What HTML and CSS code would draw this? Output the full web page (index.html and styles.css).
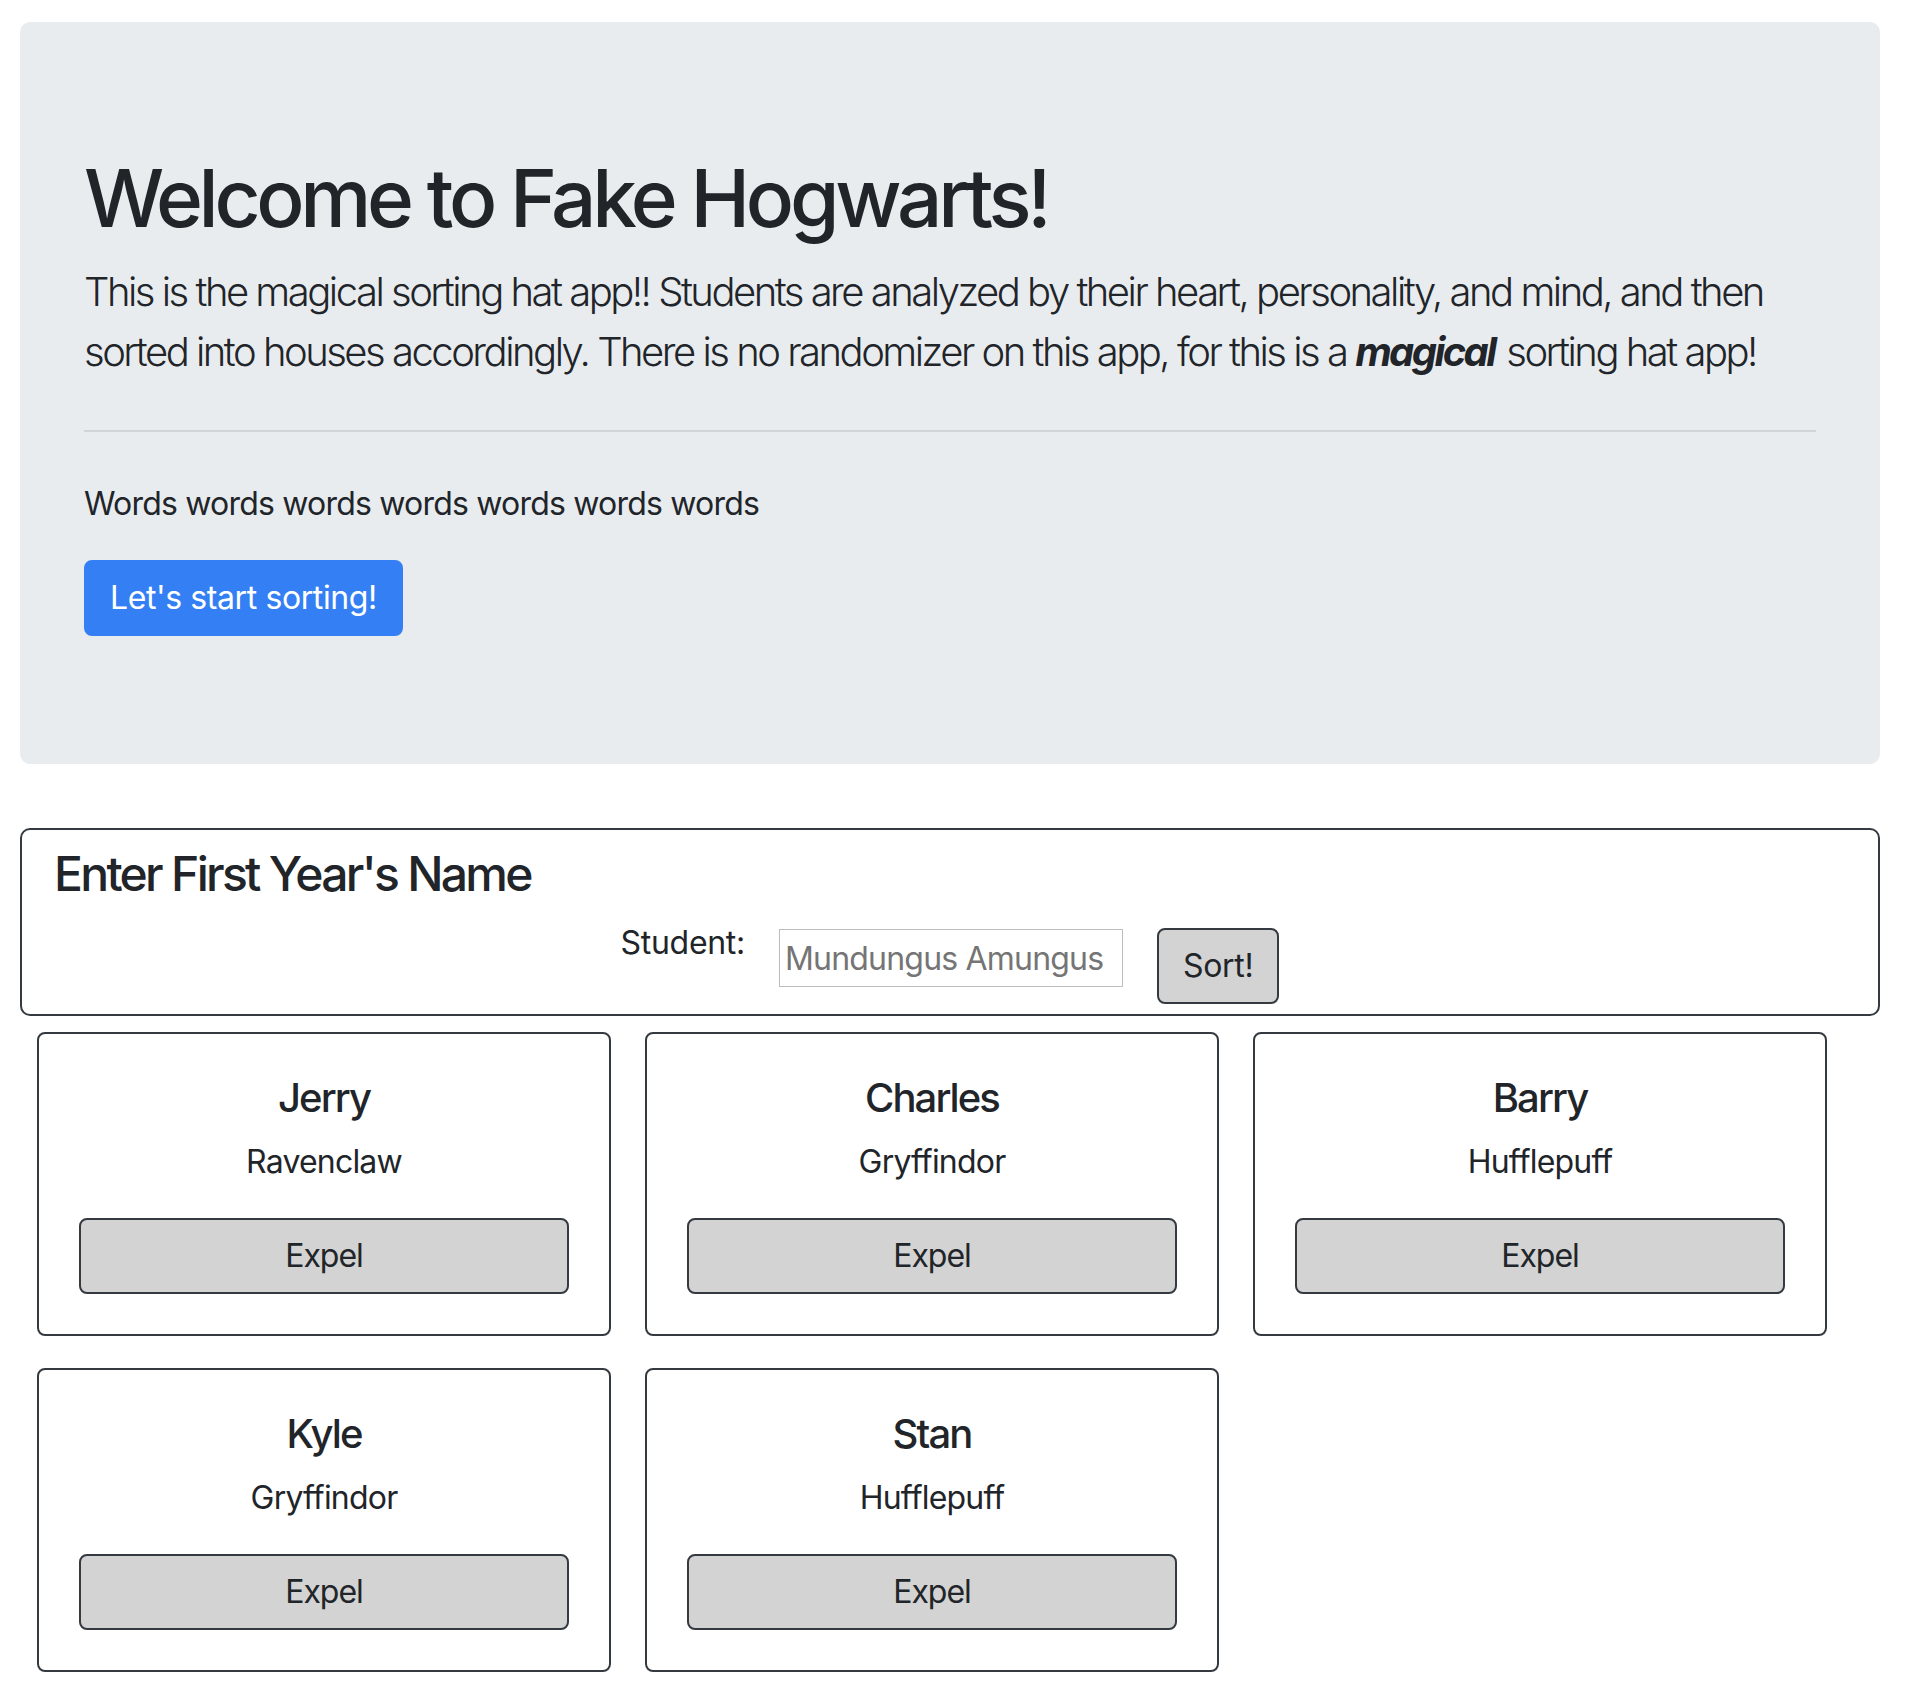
FILE: index.html
```html
<!DOCTYPE html>
<html lang="en">
<head>
<meta charset="utf-8">
<title>Fake Hogwarts</title>
<link rel="stylesheet" href="styles.css">
</head>
<body>
<div class="page">
  <section class="jumbotron">
    <h1 class="title">Welcome to Fake Hogwarts!</h1>
    <p class="lead">This is the magical sorting hat app!! Students are analyzed by their heart, personality, and mind, and then sorted into houses accordingly. There is no randomizer on this app, for this is a <em class="magic">magical</em> sorting hat app!</p>
    <hr class="divider">
    <p class="words">Words words words words words words words</p>
    <button class="btn btn-primary" type="button">Let's start sorting!</button>
  </section>

  <section class="form-box">
    <h4 class="form-title">Enter First Year's Name</h4>
    <div class="form-row">
      <label class="student-label" for="student">Student:</label>
      <input class="student-input" id="student" type="text" placeholder="Mundungus Amungus">
      <button class="btn btn-gray btn-sort" type="button">Sort!</button>
    </div>
  </section>

  <section class="cards">
    <div class="card">
      <h5 class="card-name">Jerry</h5>
      <p class="card-house">Ravenclaw</p>
      <button class="btn btn-gray btn-expel" type="button">Expel</button>
    </div>
    <div class="card">
      <h5 class="card-name">Charles</h5>
      <p class="card-house">Gryffindor</p>
      <button class="btn btn-gray btn-expel" type="button">Expel</button>
    </div>
    <div class="card">
      <h5 class="card-name">Barry</h5>
      <p class="card-house">Hufflepuff</p>
      <button class="btn btn-gray btn-expel" type="button">Expel</button>
    </div>
    <div class="card">
      <h5 class="card-name">Kyle</h5>
      <p class="card-house">Gryffindor</p>
      <button class="btn btn-gray btn-expel" type="button">Expel</button>
    </div>
    <div class="card">
      <h5 class="card-name">Stan</h5>
      <p class="card-house">Hufflepuff</p>
      <button class="btn btn-gray btn-expel" type="button">Expel</button>
    </div>
  </section>
</div>
</body>
</html>
```

FILE: styles.css
```css
* {
  box-sizing: border-box;
}

html, body {
  margin: 0;
  padding: 0;
  background: #ffffff;
}

body {
  font-family: Inter, "Noto Sans", "Liberation Sans", sans-serif;
  font-size: 32px;
  line-height: 48px;
  color: #212529;
  letter-spacing: -0.8px;
}

.page {
  padding: 22px 34px 40px 20px;
}

/* Jumbotron */
.jumbotron {
  background: #e9ecef;
  border-radius: 10px;
  padding: 128px 64px;
  margin-bottom: 64px;
}

.title {
  margin: 0 0 16px 0;
  font-size: 80px;
  line-height: 96px;
  font-weight: 500;
  letter-spacing: -4.3px;
}

.lead {
  margin: 0 0 32px 0;
  font-size: 40px;
  line-height: 60px;
  font-weight: 300;
  letter-spacing: -2.5px;
}

.magic {
  font-weight: 700;
  font-style: italic;
  letter-spacing: -2.6px;
  padding-right: 3px;
}

.divider {
  margin: 48px 0;
  border: 0;
  border-top: 2px solid rgba(0, 0, 0, 0.1);
  height: 0;
}

.words {
  margin: 0 0 32px 0;
  font-size: 32px;
  line-height: 48px;
}

/* Buttons */
.btn {
  display: inline-block;
  font-family: inherit;
  font-size: 32px;
  line-height: 48px;
  font-weight: 400;
  letter-spacing: -0.8px;
  padding: 12px 24px;
  border-radius: 8px;
  cursor: pointer;
}

.btn-primary {
  color: #ffffff;
  background: #357ff5;
  border: 2px solid #357ff5;
  letter-spacing: -0.4px;
}

.btn-gray {
  color: #212529;
  background: #d3d3d3;
  border: 2px solid #343a40;
}

/* Form box */
.form-box {
  border: 2px solid #343a40;
  border-radius: 10px;
  padding: 15px 32px 10px 32px;
}

.form-title {
  margin: 0 0 16px 0;
  font-size: 48px;
  line-height: 58px;
  font-weight: 500;
  letter-spacing: -2.7px;
}

.form-row {
  display: flex;
  justify-content: center;
  align-items: flex-start;
  gap: 34px;
}

.student-label {
  font-size: 32px;
  line-height: 48px;
  letter-spacing: -0.3px;
}

.student-input {
  margin-top: 10px;
  width: 344px;
  height: 58px;
  border: 1px solid #bdbdbd;
  padding: 4px 5px;
  font-family: inherit;
  font-size: 32px;
  line-height: 48px;
  letter-spacing: -0.8px;
  color: #212529;
  background: #ffffff;
}

.student-input::placeholder {
  color: #757575;
}

.btn-sort {
  margin-top: 9px;
  letter-spacing: -0.3px;
}

/* Cards */
.cards {
  margin-top: 16px;
  padding-left: 17px;
  display: grid;
  grid-template-columns: repeat(3, 574px);
  column-gap: 34px;
  row-gap: 32px;
}

.card {
  border: 2px solid #343a40;
  border-radius: 8px;
  padding: 40px;
  text-align: center;
}

.card-name {
  margin: 0 0 16px 0;
  font-size: 40px;
  line-height: 48px;
  font-weight: 500;
  letter-spacing: -1.9px;
}

.card-house {
  margin: 0 0 32px 0;
  font-size: 32px;
  line-height: 48px;
}

.btn-expel {
  display: block;
  width: 100%;
  padding: 12px 24px;
  line-height: 48px;
  letter-spacing: -1px;
}
```
